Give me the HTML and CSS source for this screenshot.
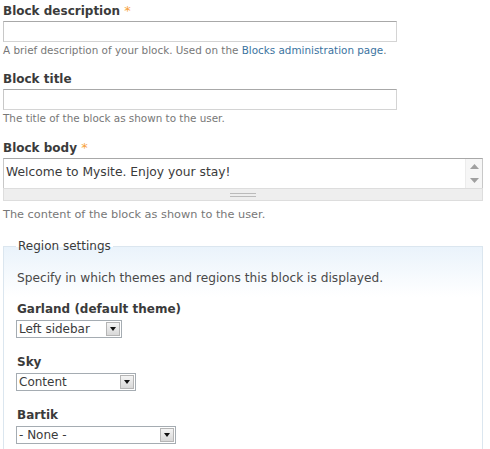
FILE: index.html
```html
<!DOCTYPE html>
<html>
<head>
<meta charset="utf-8">
<link rel="stylesheet" href="styles.css">
</head>
<body>
<div class="form">
  <div class="item item1">
    <label class="label">Block description <span class="req">*</span></label>
    <input class="text" type="text">
    <div class="desc">A brief description of your block. Used on the <a href="#">Blocks administration page</a>.</div>
  </div>
  <div class="item item2">
    <label class="label">Block title</label>
    <input class="text" type="text">
    <div class="desc">The title of the block as shown to the user.</div>
  </div>
  <div class="item">
    <label class="label">Block body <span class="req">*</span></label>
    <div class="ta-wrap">
      <div class="ta-row">
        <textarea class="ta">Welcome to Mysite. Enjoy your stay!</textarea>
        <div class="sbar">
          <svg width="9" height="5" viewBox="0 0 9 5"><path d="M0 5 L4.5 0 L9 5 Z" fill="#a0a0a0"/></svg>
          <svg width="9" height="5" viewBox="0 0 9 5"><path d="M0 0 L9 0 L4.5 5 Z" fill="#a0a0a0"/></svg>
        </div>
      </div>
      <div class="grippie"><span class="grip"></span></div>
    </div>
    <div class="desc desc-body">The content of the block as shown to the user.</div>
  </div>
  <fieldset class="region">
    <legend>Region settings</legend>
    <p class="intro">Specify in which themes and regions this block is displayed.</p>
    <div class="sel-item">
      <label class="label">Garland (default theme)</label>
      <div class="sel w1"><select><option>Left sidebar</option></select><span class="btn"><i></i></span></div>
    </div>
    <div class="sel-item">
      <label class="label">Sky</label>
      <div class="sel w2"><select><option>Content</option></select><span class="btn"><i></i></span></div>
    </div>
    <div class="sel-item">
      <label class="label">Bartik</label>
      <div class="sel w3"><select><option>- None -</option></select><span class="btn"><i></i></span></div>
    </div>
  </fieldset>
</div>
</body>
</html>
```
FILE: styles.css
```css
html, body { margin: 0; padding: 0; background: #fff; }
body {
  font-family: "DejaVu Sans", Verdana, sans-serif;
  color: #494949;
  font-size: 12px;
  overflow: hidden;
}
.form { padding: 3px 3px 0 3px; width: 480px; }
.item { margin-bottom: 15px; }
.item1 { margin-bottom: 14px; }
.item2 { margin-bottom: 15px; }
.label {
  display: block;
  font-weight: bold;
  font-size: 12px;
  color: #3b3b3b;
  line-height: 16px;
  margin-bottom: 2px;
}
.req { color: #f7a13b; font-weight: normal; font-size: 13px; }
.text {
  display: block;
  box-sizing: border-box;
  width: 394px;
  height: 21px;
  margin: 0;
  border: 1px solid #d4d4d4;
  border-top-color: #a8a8a8;
  border-left-color: #c8c8c8;
  background: #fff;
  padding: 0 3px;
  font: inherit;
}
.desc {
  font-size: 10.4px;
  color: #777;
  line-height: 13px;
  margin-top: 2px;
}
.desc a { color: #3b73a0; text-decoration: none; }
.ta-wrap { width: 480px; box-sizing: border-box; }
.ta-row {
  display: flex;
  height: 29px;
  border: 1px solid #c8c8c8;
  border-top-color: #a8a8a8;
  border-bottom: none;
}
.ta {
  flex: 1;
  border: none;
  resize: none;
  margin: 0;
  padding: 5px 3px 3px 2px;
  font-family: inherit;
  font-size: 12.3px;
  color: #3b3b3b;
  line-height: 16px;
  overflow: hidden;
  outline: none;
}
.sbar {
  width: 17px;
  background: #f6f6f6;
  border-left: 1px solid #ececec;
  display: flex;
  flex-direction: column;
  justify-content: space-between;
  align-items: center;
  padding: 5px 0 5px;
  box-sizing: border-box;
}
.grippie {
  height: 11px;
  background: #eee;
  border: 1px solid #ddd;
  display: flex;
  justify-content: center;
  align-items: center;
}
.grip {
  width: 26px;
  height: 4px;
  border-top: 1px solid #bbb;
  border-bottom: 1px solid #bbb;
  box-sizing: border-box;
}
.desc-body { margin-top: 6px; font-size: 11.3px; line-height: 15px; }
.region {
  margin: 17px 0 0 0;
  padding: 12px 13px 10px 12px;
  border: 1px solid #dbe6ef;
  border-bottom: none;
  background: linear-gradient(#eaf3fb 0, #fff 50px);
  width: 480px;
  box-sizing: border-box;
}
.region legend {
  padding: 0 2px;
  margin-left: 0;
  font-size: 12px;
  color: #3b3b3b;
}
.intro { margin: 6px 0 16px 1px; font-size: 12.2px; color: #494949; }
.sel-item { margin-bottom: 16px; }
.sel-item .label { margin-bottom: 3px; margin-left: 1px; }
.sel {
  display: flex;
  box-sizing: border-box;
  height: 18px;
  border: 1px solid #a5acb2;
  align-items: center;
  background: #fff;
}
.sel select {
  flex: 1;
  min-width: 0;
  appearance: none;
  -webkit-appearance: none;
  border: none;
  background: transparent;
  font-family: inherit;
  font-size: 12px;
  color: #3b3b3b;
  padding: 0 0 0 2px;
  margin: 0;
  height: 16px;
  outline: none;
}
.w1 { width: 106px; }
.w2 { width: 120px; }
.w3 { width: 160px; }
.btn {
  width: 14px;
  height: 14px;
  box-sizing: border-box;
  margin-right: 1px;
  border: 1px solid #b5b5b5;
  background: linear-gradient(#f4f4f4, #d8d8d8);
  display: flex;
  align-items: center;
  justify-content: center;
}
.btn i {
  width: 0; height: 0;
  border-left: 3px solid transparent;
  border-right: 3px solid transparent;
  border-top: 4px solid #111;
}
```
